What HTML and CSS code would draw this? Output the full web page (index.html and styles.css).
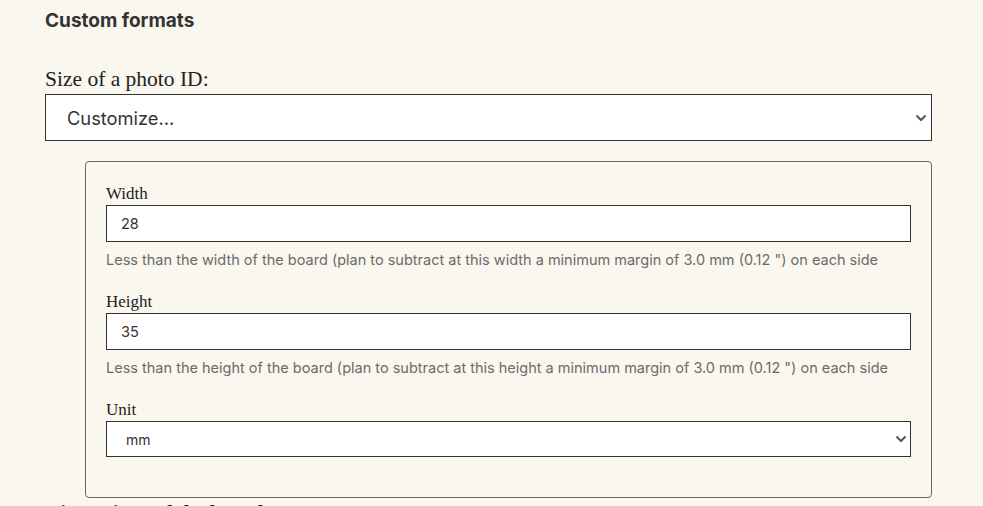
FILE: index.html
```html
<!DOCTYPE html>
<html>
<head>
<meta charset="utf-8">
<link rel="stylesheet" href="styles.css">
</head>
<body>
<div class="page">
  <h3 class="section-title">Custom formats</h3>
  <label class="main-label" for="size">Size of a photo ID:</label>
  <div class="select-wrap big">
    <select id="size" class="select big-select"><option>Customize...</option></select>
    <svg class="chev" width="12" height="8" viewBox="0 0 12 8"><path d="M1.5 1.5 L6 6 L10.5 1.5" fill="none" stroke="#555" stroke-width="2"/></svg>
  </div>
  <fieldset class="box">
    <div class="field">
      <label class="field-label" for="w">Width</label>
      <input id="w" class="input" type="text" value="28">
      <p class="help">Less than the width of the board (plan to subtract at this width a minimum margin of 3.0 mm (0.12 ") on each side</p>
    </div>
    <div class="field">
      <label class="field-label" for="h">Height</label>
      <input id="h" class="input" type="text" value="35">
      <p class="help">Less than the height of the board (plan to subtract at this height a minimum margin of 3.0 mm (0.12 ") on each side</p>
    </div>
    <div class="field last">
      <label class="field-label" for="u">Unit</label>
      <div class="select-wrap small">
        <select id="u" class="select small-select"><option>mm</option></select>
        <svg class="chev" width="12" height="8" viewBox="0 0 12 8"><path d="M1.5 1.5 L6 6 L10.5 1.5" fill="none" stroke="#555" stroke-width="2"/></svg>
      </div>
    </div>
  </fieldset>
  <p class="next-label">Dimensions of the board:</p>
</div>
</body>
</html>
```
FILE: styles.css
```css
html, body {
  margin: 0;
  padding: 0;
  background: #faf7ef;
  overflow: hidden;
}
.page {
  width: 887px;
  margin-left: 45px;
  padding-top: 9px;
}
.section-title {
  margin: 0;
  font-family: "Inter", "Liberation Sans", sans-serif;
  font-weight: 700;
  font-size: 19px;
  line-height: 24px;
  color: #333;
}
.main-label {
  display: block;
  margin-top: 33px;
  font-family: "Liberation Serif", serif;
  font-size: 21.5px;
  line-height: 26px;
  color: #222;
  margin-bottom: 2px;
}
.select-wrap {
  position: relative;
}
.select {
  appearance: none;
  -webkit-appearance: none;
  display: block;
  width: 100%;
  box-sizing: border-box;
  background: #fff;
  border: 1px solid #333;
  border-radius: 0;
  margin: 0;
  font-family: "Inter", "Liberation Sans", sans-serif;
  color: #333;
  outline: none;
}
.big-select {
  height: 47px;
  padding: 0 21px;
  font-size: 18.3px;
}
.small-select {
  height: 36px;
  padding: 0 19px;
  font-size: 14px;
}
.chev {
  position: absolute;
  top: 50%;
  margin-top: -4px;
  pointer-events: none;
}
.big .chev { right: 5px; }
.small .chev { right: 4px; }
.box {
  margin: 20px 0 0 40px;
  padding: 22px 20px 40px;
  border: 1px solid #666;
  border-radius: 4px;
  min-width: 0;
}
.field {
  margin-bottom: 22px;
}
.field.last { margin-bottom: 0; }
.field-label {
  display: block;
  font-family: "Liberation Serif", serif;
  font-size: 17px;
  line-height: 20px;
  color: #222;
  margin-bottom: 1px;
}
.input {
  display: block;
  width: 100%;
  box-sizing: border-box;
  height: 37px;
  margin: 0;
  padding: 0 14px;
  border: 1px solid #333;
  border-radius: 0;
  background: #fff;
  font-family: "Inter", "Liberation Sans", sans-serif;
  font-size: 14.5px;
  color: #333;
  outline: none;
}
.help {
  margin: 8px 0 0;
  font-family: "Inter", "Liberation Sans", sans-serif;
  font-size: 14.5px;
  line-height: 20px;
  color: #6b6b6b;
}
.next-label {
  margin: 0;
  padding-top: 2px;
  font-family: "Liberation Serif", serif;
  font-weight: 700;
  font-size: 21px;
  line-height: 26px;
  color: #222;
}
```
